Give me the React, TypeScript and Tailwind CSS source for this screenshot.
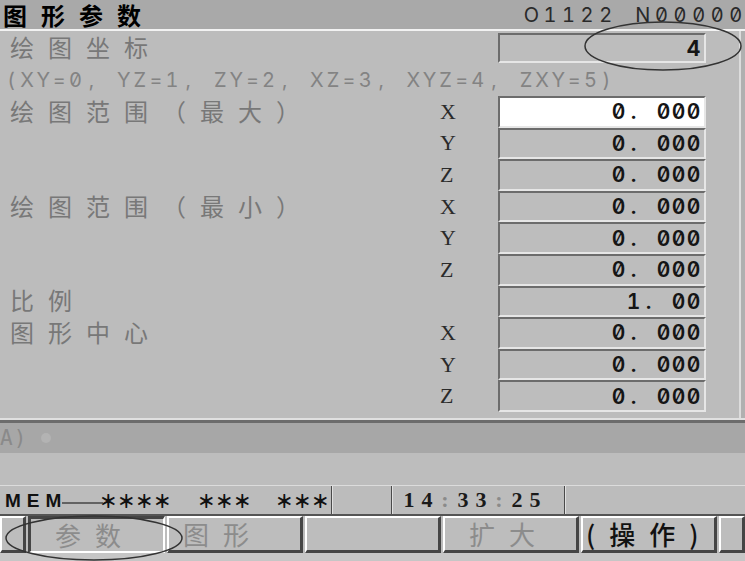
import React from 'react';

type Row = { label?: string; axis: string; value: string; active?: boolean };

const rows: Row[] = [
  { label: '绘图范围（最大）', axis: 'X', value: '0. 000', active: true },
  { axis: 'Y', value: '0. 000' },
  { axis: 'Z', value: '0. 000' },
  { label: '绘图范围（最小）', axis: 'X', value: '0. 000' },
  { axis: 'Y', value: '0. 000' },
  { axis: 'Z', value: '0. 000' },
  { label: '比例', axis: '', value: '1. 00' },
  { label: '图形中心', axis: 'X', value: '0. 000' },
  { axis: 'Y', value: '0. 000' },
  { axis: 'Z', value: '0. 000' },
];

// fixed-pitch cells so the slashed-zero font lines up like the CNC screen font
function Cells({ text, cell }: { text: string; cell: string }) {
  return (
    <>
      {text.split('').map((ch, i) => (
        <span key={i} className={`inline-block text-center ${cell}`}>
          {ch === ' ' ? '\u00a0' : ch}
        </span>
      ))}
    </>
  );
}

function Field({ value, active, bold }: { value: string; active?: boolean; bold?: boolean }) {
  return (
    <div
      className={`h-full w-[208px] flex items-center justify-end pr-[3px] border-2 border-t-[#6c6c6c] border-l-[#6c6c6c] border-b-[#e6e6e6] border-r-[#e6e6e6] ${active ? 'bg-white' : 'bg-[#bdbdbd]'}`}
    >
      <span className={`font-['Inter',sans-serif] slashed-zero tabular-nums text-[21px] leading-none text-[#151515] whitespace-nowrap ${bold ? 'font-bold' : 'font-semibold'}`}>
        <Cells text={value} cell="w-[15px]" />
      </span>
    </div>
  );
}

function Label({ text }: { text: string }) {
  return (
    <span className="font-['Noto_Sans_CJK_SC',sans-serif] text-[24px] tracking-[14px] leading-[28px] text-[#787878] whitespace-nowrap">{text}</span>
  );
}

function SoftKey({ text, pressed, dark, pad, w }: { text?: string; pressed?: boolean; dark?: boolean; pad: string; w: string }) {
  return (
    <div
      className={`${w} h-full flex items-center bg-[#bdbdbd] ${pad} ${
        pressed
          ? 'border-t-[3px] border-l-[3px] border-t-[#454545] border-l-[#454545] border-r-2 border-b-2 border-r-white border-b-white'
          : 'border-t-2 border-l-2 border-t-white border-l-white border-r-[3px] border-b-[3px] border-r-[#454545] border-b-[#454545]'
      }`}
    >
      {text && (
        <span
          className={`font-['Noto_Sans_CJK_SC',sans-serif] text-[26px] tracking-[14px] leading-[30px] whitespace-nowrap ${dark ? 'font-medium text-[#111111]' : 'text-[#8c8c8c]'}`}
        >
          {text}
        </span>
      )}
    </div>
  );
}

export default function App() {
  return (
    <div className="w-[745px] h-[561px] bg-[#bcbcbc] relative overflow-hidden">
      {/* title bar */}
      <div className="h-[29px] bg-[#a9a9a9] flex items-center">
        <span className="pl-[3px] font-['Noto_Sans_CJK_SC',sans-serif] font-bold text-[24px] tracking-[14px] leading-[29px] text-black whitespace-nowrap">图形参数</span>
        <span className="ml-auto w-[223px] whitespace-nowrap font-['Inter',sans-serif] slashed-zero tabular-nums text-[20px] leading-none text-[#2a2a2a]">
          <Cells text="O1122 N00000" cell="w-[18.6px]" />
        </span>
      </div>
      <div className="h-[2px] bg-[#f2f2f2]" />

      {/* parameter area */}
      <div className="h-[387px] flex">
        <div className="flex-1 flex flex-col pt-[2px]">
          <div className="h-[30px] flex items-center">
            <div className="w-[498px] pl-[10px]"><Label text="绘图坐标" /></div>
            <Field value="4" bold />
          </div>
          <div className="h-[33px] flex items-center pl-[3px]">
            <span className="font-['Inter',sans-serif] slashed-zero tabular-nums text-[20px] leading-none text-[#838383] whitespace-nowrap">
              <Cells text="(XY=0, YZ=1, ZY=2, XZ=3, XYZ=4, ZXY=5)" cell="w-[16.1px]" />
            </span>
          </div>
          {rows.map((r, i) => (
            <div key={i} className="h-[31.6px] flex items-center">
              <div className="w-[430px] pl-[10px]">{r.label && <Label text={r.label} />}</div>
              <div className="w-[68px] pl-[10px] font-['Liberation_Serif',serif] text-[22px] leading-none text-[#2a2a2a]">{r.axis}</div>
              <Field value={r.value} active={r.active} />
            </div>
          ))}
        </div>
        <div className="w-[2px] bg-[#dcdcdc]" />
        <div className="w-[4px] bg-[#b0b0b0]" />
      </div>

      {/* input line */}
      <div className="h-[2px] bg-[#e0e0e0]" />
      <div className="h-[3px] bg-[#6c6c6c]" />
      <div className="h-[30px] bg-[#a7a7a7] flex items-center">
        <span className="font-['DejaVu_Sans_Mono',monospace] text-[21px] tracking-[1px] leading-none text-[#8a8a8a]">A)</span>
        <span className="ml-[14px] w-[10px] h-[10px] rounded-full bg-[#b3b3b3]" />
      </div>
      <div className="h-[32px] bg-[#bdbdbd]" />

      {/* status bar */}
      <div className="h-[29px] flex border-t border-[#dcdcdc]">
        <div className="w-[332px] flex items-center pl-[5px] border-r border-[#4a4a4a]">
          <span className="font-['Liberation_Sans',sans-serif] font-bold text-[19px] tracking-[6px] leading-none text-[#111111]">MEM</span>
          <span className="ml-[32px] font-['Noto_Sans_CJK_SC',sans-serif] font-black text-[18px] leading-none text-[#111111]">＊＊＊＊</span>
          <span className="ml-[26px] font-['Noto_Sans_CJK_SC',sans-serif] font-black text-[18px] leading-none text-[#111111]">＊＊＊</span>
          <span className="ml-[24px] font-['Noto_Sans_CJK_SC',sans-serif] font-black text-[18px] leading-none text-[#111111]">＊＊＊</span>
        </div>
        <div className="w-[60px] border-l border-r border-l-[#e0e0e0] border-r-[#4a4a4a]" />
        <div className="w-[173px] flex items-center pl-[7px] border-l border-r border-l-[#e0e0e0] border-r-[#4a4a4a]">
          <span className="font-['Liberation_Serif',serif] font-bold text-[22px] leading-none text-[#1a1a1a]">
            <Cells text="14" cell="w-[18px]" />
            <span className="text-[#8a8a8a]"><Cells text=":" cell="w-[18px]" /></span>
            <Cells text="33" cell="w-[18px]" />
            <span className="text-[#8a8a8a]"><Cells text=":" cell="w-[18px]" /></span>
            <Cells text="25" cell="w-[18px]" />
          </span>
        </div>
        <div className="flex-1 border-l border-[#e0e0e0]" />
      </div>
      <div className="h-[2px] bg-[#555555]" />

      {/* soft keys */}
      <div className="h-[37px] flex gap-[2px]">
        <SoftKey w="w-[26px]" pad="" />
        <SoftKey w="w-[137px]" pad="pl-[24px]" text="参数" pressed />
        <SoftKey w="w-[136px]" pad="pl-[14px]" text="图形" />
        <SoftKey w="w-[136px]" pad="" />
        <SoftKey w="w-[136px]" pad="pl-[24px]" text="扩大" />
        <SoftKey w="w-[136px]" pad="pl-[3px]" text="(操作)" dark />
        <SoftKey w="flex-1" pad="" />
      </div>
      <div className="h-[8px] bg-[#c6c6c6]" />

      {/* hand-drawn annotation marks */}
      <svg className="absolute inset-0 pointer-events-none" width={745} height={561}>
        <ellipse cx={663} cy={46} rx={78} ry={24} fill="none" stroke="#333" strokeWidth={1.5} />
        <ellipse cx={94} cy={538} rx={88} ry={22} fill="none" stroke="#333" strokeWidth={1.5} />
        <line x1={62} y1={503} x2={103} y2={503} stroke="#444" strokeWidth={1.5} />
      </svg>
    </div>
  );
}
